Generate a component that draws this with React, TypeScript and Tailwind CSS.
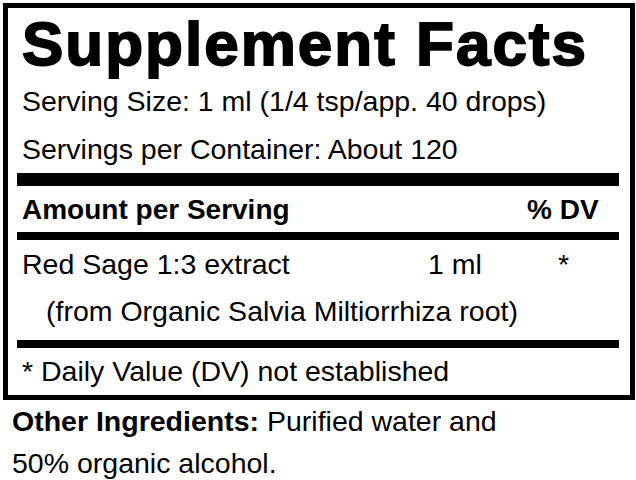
export default function App() {
  return (
    <div className="w-[636px] h-[480px] bg-white text-black overflow-hidden font-['Liberation_Sans',Arial,sans-serif]">
      {/* label box */}
      <div className="ml-[3px] mt-[3px] w-[632px] border-[5px] border-black pl-[9px] pr-[11px]">
        <div className="h-[68px] pl-[5px] pt-[2px] text-[62px] leading-[68px] font-bold tracking-[2px] whitespace-nowrap [-webkit-text-stroke:1.8px_black]">
          Supplement Facts
        </div>
        <div className="h-[50px] pl-[5px] text-[28.5px] leading-[50px] whitespace-nowrap">
          Serving Size: 1 ml (1/4 tsp/app. 40 drops)
        </div>
        <div className="h-[47px] pl-[5px] text-[28.5px] leading-[47px] whitespace-nowrap">
          Servings per Container: About 120
        </div>
        <div className="h-[13px] bg-black" />
        <div className="h-[46px] pl-[5px] grid grid-cols-[406px_99px_90px] text-[28px] leading-[48px] font-bold whitespace-nowrap">
          <span>Amount per Serving</span>
          <span />
          <span>% DV</span>
        </div>
        <div className="h-[8px] bg-black" />
        <div className="h-[48px] pl-[5px] grid grid-cols-[406px_99px_90px] text-[28.5px] leading-[48px] whitespace-nowrap">
          <span>Red Sage 1:3 extract</span>
          <span>1 ml</span>
          <span className="pl-[31px]">*</span>
        </div>
        <div className="h-[52px] pl-[29px] text-[28.5px] leading-[46px] whitespace-nowrap">
          (from Organic Salvia Miltiorrhiza root)
        </div>
        <div className="h-[8px] bg-black" />
        <div className="h-[47px] pl-[5px] text-[28.5px] leading-[47px] whitespace-nowrap">
          * Daily Value (DV) not established
        </div>
      </div>

      {/* ingredients */}
      <div className="pl-[12px] text-[28.5px] leading-[42px] whitespace-nowrap">
        <p>
          <span className="font-bold">Other Ingredients:</span> Purified water and
        </p>
        <p>50% organic alcohol.</p>
      </div>
    </div>
  )
}
